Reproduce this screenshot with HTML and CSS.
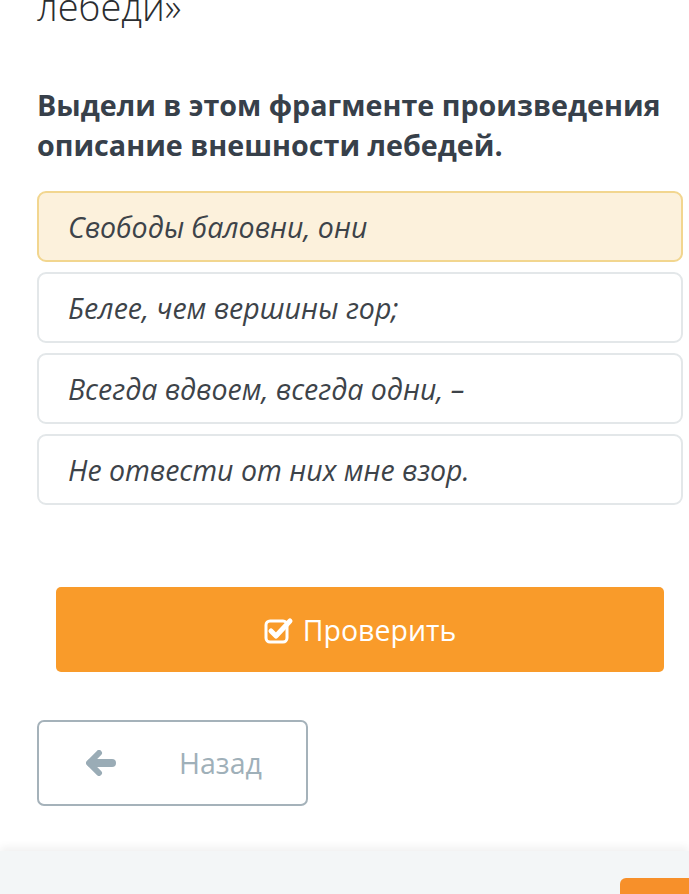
FILE: index.html
```html
<!DOCTYPE html>
<html lang="ru">
<head>
<meta charset="utf-8">
<link rel="stylesheet" href="styles.css">
</head>
<body>
<main class="page">
  <div class="title">лебеди»</div>
  <h2 class="question">Выдели в этом фрагменте произведения описание внешности лебедей.</h2>
  <ul class="options">
    <li class="option selected">Свободы баловни, они</li>
    <li class="option">Белее, чем вершины гор;</li>
    <li class="option">Всегда вдвоем, всегда одни, –</li>
    <li class="option">Не отвести от них мне взор.</li>
  </ul>
  <div class="check-wrap">
    <button class="check">
      <svg class="check-icon" width="30" height="28" viewBox="0 0 30 28">
        <rect x="2" y="4" width="21" height="21" rx="4" fill="none" stroke="#fff" stroke-width="3"/>
        <path d="M7 14 L12 19 L26 4" fill="none" stroke="#fff" stroke-width="5" stroke-linecap="round" stroke-linejoin="round"/>
      </svg>
      <span>Проверить</span>
    </button>
  </div>
  <button class="back">
    <svg class="back-icon" width="30" height="26" viewBox="0 0 30 26">
      <path d="M13 3 L3 13 L13 23" fill="none" stroke="#9aacb6" stroke-width="6" stroke-linecap="round" stroke-linejoin="round"/>
      <path d="M5 13 H26" stroke="#9aacb6" stroke-width="8" stroke-linecap="round"/>
    </svg>
    <span>Назад</span>
  </button>
</main>
<footer class="footer">
  <div class="footer-btn"></div>
</footer>
</body>
</html>
```
FILE: styles.css
```css
* { box-sizing: border-box; }
html, body { margin: 0; padding: 0; background: #fff; }
body {
  font-family: "Open Sans", "Noto Sans", sans-serif;
  width: 689px;
  height: 894px;
  overflow: hidden;
}
.page {
  display: flow-root;
  padding: 0 6px 0 37px;
  height: 851px;
}
.title {
  font-size: 38px;
  line-height: 40px;
  color: #2a2d30;
  margin-top: -14px;
  font-weight: 300;
}
.question {
  margin: 59px 0 0;
  font-size: 28.7px;
  line-height: 40px;
  font-weight: 700;
  color: #37404a;
}
.options {
  list-style: none;
  margin: 26px 0 0;
  padding: 0;
  display: flex;
  flex-direction: column;
  gap: 10px;
}
.option {
  height: 71px;
  border: 2px solid #e3e7e9;
  border-radius: 9px;
  padding: 0 0 0 29px;
  display: flex;
  align-items: center;
  font-style: italic;
  font-weight: 400;
  font-size: 28.5px;
  color: #3d4349;
  background: #fff;
}
.option.selected {
  background: #fcf1dc;
  border-color: #f2d68f;
}
.check-wrap {
  padding: 82px 19px 0 19px;
}
.check {
  width: 100%;
  height: 85px;
  border: none;
  border-radius: 5px;
  background: #f99b2a;
  color: #fff;
  font-family: inherit;
  font-weight: 400;
  font-size: 28.5px;
  display: flex;
  align-items: center;
  justify-content: center;
  gap: 9px;
  padding: 0;
}
.check-icon { margin-top: 2px; }
.back {
  margin-top: 48px;
  width: 271px;
  height: 86px;
  border: 2px solid #a5b2ba;
  border-radius: 7px;
  background: #fff;
  display: flex;
  align-items: center;
  padding: 0 0 0 47px;
  font-family: inherit;
  font-weight: 400;
  font-size: 28.5px;
  color: #9fb0b9;
}
.back span { margin-left: 63px; }
.footer {
  height: 43px;
  background: #f3f6f7;
  box-shadow: 0 -4px 8px rgba(0,0,0,0.06);
  position: relative;
}
.footer-btn {
  position: absolute;
  left: 620px;
  top: 27px;
  width: 80px;
  height: 30px;
  background: #f7902a;
  border-radius: 6px;
}
```
